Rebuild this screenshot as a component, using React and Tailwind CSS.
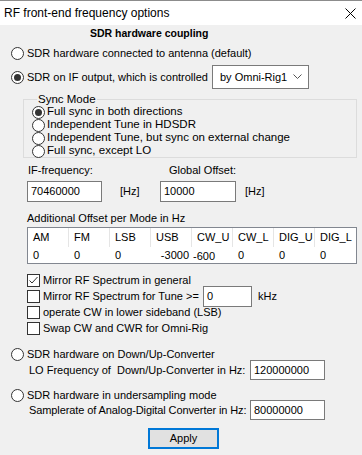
const font = { fontFamily: '"Liberation Sans", Arial, sans-serif' };

function Radio({ checked }) {
  return (
    <span className="relative inline-flex h-[13px] w-[13px] shrink-0 items-center justify-center rounded-full border border-[#333] bg-white">
      {checked && <span className="h-[7px] w-[7px] rounded-full bg-[#333]" />}
    </span>
  );
}

function Check({ checked }) {
  return (
    <span className="inline-flex h-[13px] w-[13px] shrink-0 items-center justify-center border border-[#333] bg-white">
      {checked && (
        <svg width="11" height="11" viewBox="0 0 11 11">
          <polyline points="1.5,5.5 4,8 9.5,2" fill="none" stroke="#333" strokeWidth="1" />
        </svg>
      )}
    </span>
  );
}

function Field({ value, className }) {
  return (
    <div className={"flex shrink-0 items-center border border-[#7a7a7a] bg-white pl-[3px] " + className}>
      {value}
    </div>
  );
}

const modes = ["AM", "FM", "LSB", "USB", "CW_U", "CW_L", "DIG_U", "DIG_L"];

export default function App() {
  return (
    <div
      className="h-[455px] w-[362px] overflow-hidden whitespace-nowrap bg-[#f0f0f0] text-[11px] leading-none text-black"
      style={font}
    >
      <div className="flex h-[25px] items-center justify-between border-t border-[#8c8c8c] bg-white pl-[4px] pr-[6px] text-[12px]">
        <span>RF front-end frequency options</span>
        <svg width="11" height="11" viewBox="0 0 11 11">
          <path d="M0.5 0.5 L10.5 10.5 M10.5 0.5 L0.5 10.5" stroke="#000" strokeWidth="1" />
        </svg>
      </div>

      <div className="flex h-[17px] items-center pl-[90px] text-[10.5px] font-bold">SDR hardware coupling</div>

      <div className="mt-[1px] flex h-[20px] items-center gap-[3px] pl-[11px]">
        <Radio />
        <span>SDR hardware connected to antenna (default)</span>
      </div>

      <div className="mt-[1px] flex h-[26px] items-center pl-[11px]">
        <Radio checked />
        <span className="ml-[3px] w-[185px]">SDR on IF output, which is controlled</span>
        <div className="flex h-[24px] w-[97px] items-center justify-between border border-[#7a7a7a] bg-white pl-[7px] pr-[6px]">
          <span>by Omni-Rig1</span>
          <svg width="9" height="6" viewBox="0 0 9 6">
            <polyline points="0.5,0.5 4.5,4.5 8.5,0.5" fill="none" stroke="#555" strokeWidth="1" />
          </svg>
        </div>
      </div>

      <fieldset className="ml-[23px] mr-[5px] mt-[4px] h-[64px] border border-[#dcdcdc] pl-[8px] text-[11.5px]">
        <legend className="ml-[5px] px-[1px]">Sync Mode</legend>
        <div className="flex flex-col">
          {[
            ["Full sync in both directions", true],
            ["Independent Tune in HDSDR"],
            ["Independent Tune, but sync on external change"],
            ["Full sync, except LO"],
          ].map(([t, c]) => (
            <div key={t} className="flex h-[13px] items-center gap-[2px]">
              <Radio checked={c} />
              <span>{t}</span>
            </div>
          ))}
        </div>
      </fieldset>

      <div className="mt-[3px] flex h-[18px] items-center pl-[28px]">
        <span className="w-[141px]">IF-frequency:</span>
        <span>Global Offset:</span>
      </div>

      <div className="mt-[2px] flex h-[21px] items-center pl-[27px]">
        <Field value="70460000" className="h-[21px] w-[75px]" />
        <span className="ml-[18px] w-[40px]">[Hz]</span>
        <Field value="10000" className="h-[21px] w-[76px]" />
        <span className="ml-[9px]">[Hz]</span>
      </div>

      <div className="mt-[7px] flex h-[18px] items-center pl-[27px]">Additional Offset per Mode in Hz</div>

      <div className="ml-[27px] mr-[5px] border border-[#828790] bg-white">
        <div className="grid h-[19px] grid-cols-8">
          {modes.map((m, i) => (
            <div key={m} className={"flex items-center pl-[5px] " + (i < 7 ? "border-r border-[#e5e5e5]" : "")}>
              {m}
            </div>
          ))}
        </div>
        <div className="grid h-[16px] grid-cols-8">
          {["0", "0", "0", "-3000", "-600", "0", "0", "0"].map((v, i) => (
            <div
              key={i}
              className={
                "flex items-center " +
                (i === 3 ? "justify-end pr-[3px]" : i === 4 ? "pl-[1px] pt-[3px]" : "pl-[5px]")
              }
            >
              {v}
            </div>
          ))}
        </div>
      </div>

      <div className="mt-[8px] flex flex-col pl-[27px]">
        <div className="flex h-[16px] items-center gap-[3px]">
          <Check checked />
          <span>Mirror RF Spectrum in general</span>
        </div>
        <div className="flex h-[16px] items-center gap-[3px]">
          <Check />
          <span className="w-[157px]">Mirror RF Spectrum for Tune &gt;=</span>
          <Field value="0" className="h-[21px] w-[49px]" />
          <span className="ml-[3px]">kHz</span>
        </div>
        <div className="flex h-[16px] items-center gap-[3px]">
          <Check />
          <span>operate CW in lower sideband (LSB)</span>
        </div>
        <div className="flex h-[16px] items-center gap-[3px]">
          <Check />
          <span>Swap CW and CWR for Omni-Rig</span>
        </div>
      </div>

      <div className="mt-[10px] flex h-[16px] items-center gap-[3px] pl-[11px]">
        <Radio />
        <span>SDR hardware on Down/Up-Converter</span>
      </div>
      <div className="flex h-[16px] items-center pl-[29px]">
        <span className="w-[221px]">LO Frequency of &nbsp;Down/Up-Converter in Hz:</span>
        <Field value="120000000" className="h-[20px] w-[75px]" />
      </div>

      <div className="mt-[10px] flex h-[14px] items-center gap-[3px] pl-[11px]">
        <Radio />
        <span>SDR hardware in undersampling mode</span>
      </div>
      <div className="flex h-[16px] items-center pl-[29px]">
        <span className="w-[221px] tracking-[-0.1px]">Samplerate of Analog-Digital Converter in Hz:</span>
        <Field value="80000000" className="h-[20px] w-[75px]" />
      </div>

      <div className="mt-[10px] flex justify-center pl-[5px]">
        <button className="h-[21px] w-[71px] border-2 border-[#0078d7] bg-[#e1e1e1] text-[11px]" style={font}>
          Apply
        </button>
      </div>
    </div>
  );
}
